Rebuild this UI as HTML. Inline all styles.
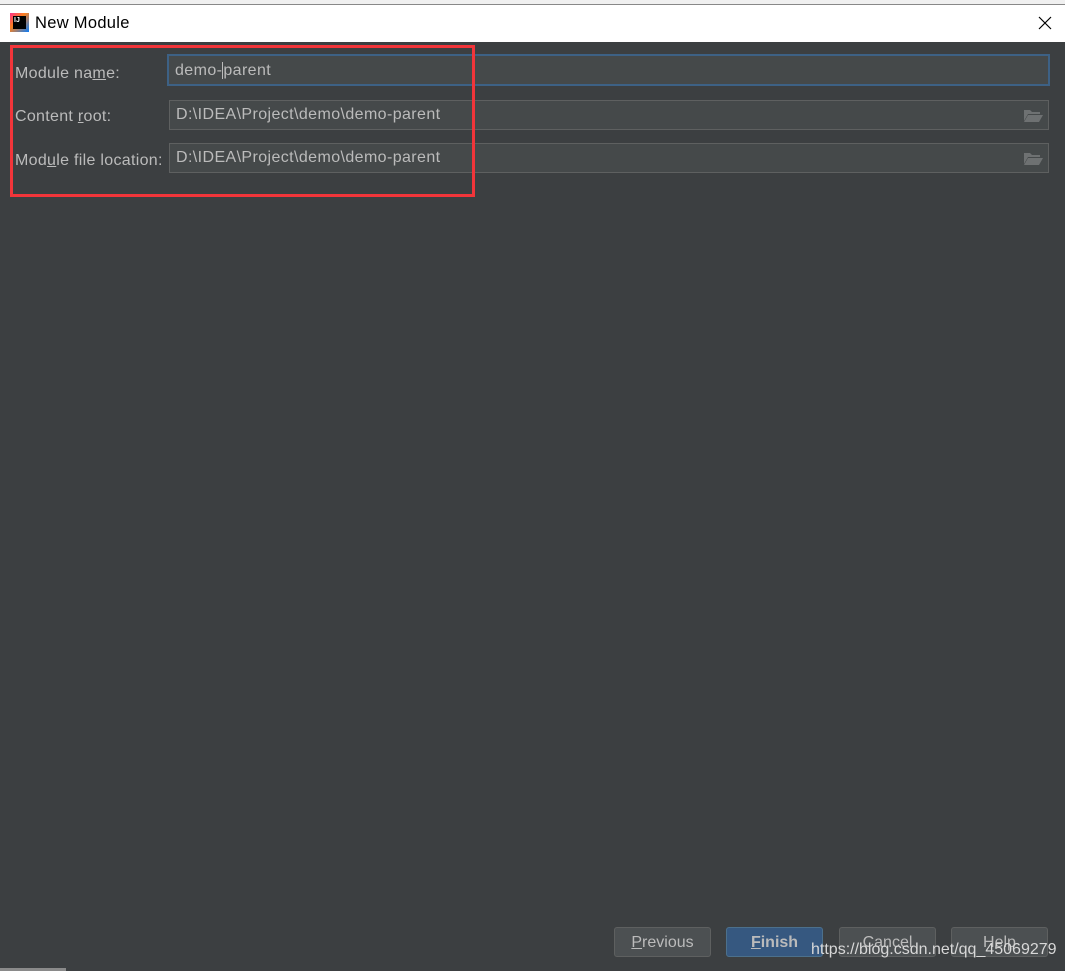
<!DOCTYPE html>
<html><head><style>
*{margin:0;padding:0;box-sizing:border-box}
body{width:1065px;height:971px;background:#3c3f41;position:relative;overflow:hidden;font-family:"Liberation Sans",sans-serif}
.abs{position:absolute}
.lbl{color:#bbbbbb;font-size:16px;letter-spacing:0.3px}
.inp{position:absolute;background:#45494a;border:1px solid #5e6060;color:#bbbbbb;font-size:16px;letter-spacing:0.4px;padding-left:6px;line-height:28px}
.btn{position:absolute;top:927px;width:97px;height:30px;border:1px solid #5e6060;border-radius:3px;background:#4c5052;color:#bbbbbb;font-size:16px;text-align:center;line-height:29px}
</style></head><body>
<div class="abs" style="left:0;top:0;width:1065px;height:5px;background:#f0f0f0;border-bottom:1px solid #888"></div>
<div class="abs" style="left:0;top:5px;width:1065px;height:37px;background:#fff"></div>
<div class="abs" style="left:10px;top:13px;width:19px;height:19px;background:linear-gradient(135deg,#ff318c,#fc801d 40%,#087cfa);"></div>
<div class="abs" style="left:13px;top:16px;width:13px;height:13px;background:#000;color:#fff;font-size:7px;font-weight:bold;line-height:9px;padding-left:1px">IJ</div>
<div class="abs" style="left:35px;top:14px;font-size:16.5px;color:#000;letter-spacing:0.3px">New Module</div>
<svg class="abs" style="left:1038px;top:16px" width="14" height="14"><path d="M1 1L13 13M13 1L1 13" stroke="#000" stroke-width="1.2"/></svg>

<div class="abs lbl" style="left:15px;top:65px">Module na<u>m</u>e:</div>
<div class="abs lbl" style="left:15px;top:108px">Content <u>r</u>oot:</div>
<div class="abs lbl" style="left:15px;top:152px">Mod<u>u</u>le file location:</div>

<div class="inp" style="left:167px;top:54px;width:883px;height:32px;border:2px solid #3d6185;line-height:29px">demo-<span style="border-left:1px solid #bbb"></span>parent</div>
<div class="inp" style="left:169px;top:100px;width:880px;height:30px">D:\IDEA\Project\demo\demo-parent</div>
<div class="inp" style="left:169px;top:143px;width:880px;height:30px">D:\IDEA\Project\demo\demo-parent</div>
<svg class="abs" style="left:1024px;top:108px" width="19" height="14"><path d="M0 2h6l2 2h8v2H4L0 13z M4 7h15l-4 7H0z" fill="#6e7172"/></svg>
<svg class="abs" style="left:1024px;top:151px" width="19" height="14"><path d="M0 2h6l2 2h8v2H4L0 13z M4 7h15l-4 7H0z" fill="#6e7172"/></svg>

<div class="abs" style="left:10px;top:45px;width:465px;height:152px;border:3px solid #f2353a"></div>

<div class="btn" style="left:614px"><u>P</u>revious</div>
<div class="btn" style="left:726px;background:#365880;border-color:#4c708c;font-weight:bold"><u>F</u>inish</div>
<div class="btn" style="left:839px">Cancel</div>
<div class="btn" style="left:951px">Help</div>
<div class="abs" style="left:811px;top:941px;font-size:16px;color:#d8d8d8">https://blog.csdn.net/qq_45069279</div>
<div class="abs" style="left:0;top:968px;width:66px;height:3px;background:#8a8a8a"></div>
</body></html>
